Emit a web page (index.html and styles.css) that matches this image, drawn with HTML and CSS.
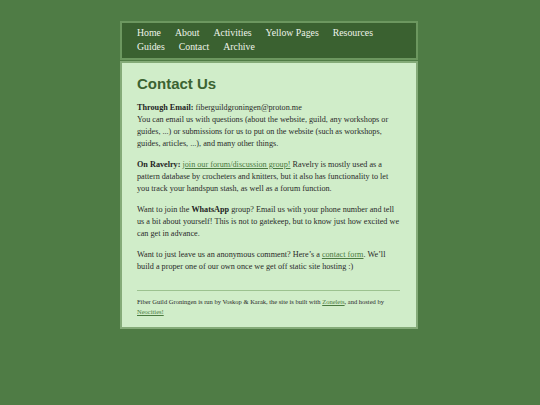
FILE: index.html
```html
<!DOCTYPE html>
<html lang="en">
<head>
<meta charset="utf-8">
<title>Contact Us</title>
<link rel="stylesheet" href="styles.css">
</head>
<body>
<div class="site">
  <nav class="nav">
    <a href="#">Home</a>
    <a href="#">About</a>
    <a href="#">Activities</a>
    <a href="#">Yellow Pages</a>
    <a href="#">Resources</a>
    <a href="#">Guides</a>
    <a href="#">Contact</a>
    <a href="#">Archive</a>
  </nav>
  <main class="content">
    <h1 class="title">Contact Us</h1>
    <p><strong>Through Email:</strong> fiberguildgroningen@proton.me<br>You can email us with questions (about the website, guild, any workshops or guides, ...) or submissions for us to put on the website (such as workshops, guides, articles, ...), and many other things.</p>
    <p><strong>On Ravelry:</strong> <a href="#">join our forum/discussion group!</a> Ravelry is mostly used as a pattern database by crocheters and knitters, but it also has functionality to let you track your handspun stash, as well as a forum function.</p>
    <p>Want to join the <strong>WhatsApp</strong> group? Email us with your phone number and tell us a bit about yourself! This is not to gatekeep, but to know just how excited we can get in advance.</p>
    <p>Want to just leave us an anonymous comment? Here’s a <a href="#">contact form</a>. We’ll build a proper one of our own once we get off static site hosting :)</p>
    <footer class="footer">
      <p>Fiber Guild Groningen is run by Voskop &amp; Karak, the site is built with <a href="#">Zonelets</a>, and hosted by <a href="#">Neocities!</a></p>
    </footer>
  </main>
</div>
</body>
</html>
```
FILE: styles.css
```css
html, body {
  margin: 0;
  padding: 0;
}
body {
  background: #4f7c45;
  font-family: "Liberation Serif", "Times New Roman", serif;
  color: #2a2a2a;
}
.site {
  width: 298px;
  margin: 21px 0 0 120px;
}
.nav {
  display: flex;
  flex-wrap: wrap;
  column-gap: 14px;
  background: #3a6130;
  border: 2px solid #6c975f;
  padding: 3px 15px;
  margin-bottom: 1px;
  font-size: 9.8px;
  line-height: 14.3px;
}
.nav a {
  color: #eef4ea;
  text-decoration: none;
}
.content {
  background: #d0edc9;
  border: 2px solid #84ab78;
  padding: 12px 16.5px 11px 15px;
  font-size: 8.2px;
  line-height: 12.3px;
}
.title {
  font-family: "Liberation Sans", Arial, sans-serif;
  font-size: 15px;
  line-height: 17px;
  font-weight: bold;
  color: #3b6332;
  margin: 0 0 10px;
}
.content p {
  margin: 0 0 8px;
}
.content strong {
  color: #1f1f1f;
}
.content a {
  color: #4a7a40;
  text-decoration: underline;
}
.footer {
  border-top: 1px solid #9cc290;
  margin-top: 17px;
  padding-top: 6px;
  font-size: 6.5px;
  line-height: 9.5px;
}
.content .footer p {
  margin: 0;
}
```
